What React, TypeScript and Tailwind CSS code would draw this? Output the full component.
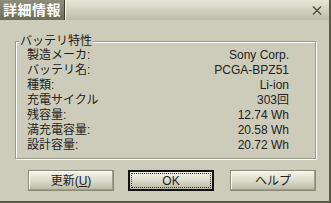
import React from "react";

const rows: [string, string][] = [
  ["製造メーカ:", "Sony Corp."],
  ["バッテリ名:", "PCGA-BPZ51"],
  ["種類:", "Li-ion"],
  ["充電サイクル", "303回"],
  ["残容量:", "12.74 Wh"],
  ["満充電容量:", "20.58 Wh"],
  ["設計容量:", "20.72 Wh"],
];

const font = { fontFamily: '"Liberation Sans", "Noto Sans CJK JP", sans-serif' };

function Btn({ children, def }: { children: React.ReactNode; def?: boolean }) {
  return (
    <div
      className={
        "h-[21px] w-[86px] flex items-center justify-center text-[12px] text-[#222] bg-gradient-to-b from-[#f4f4ea] via-[#dcdccc] to-[#b8b8a4] " +
        (def ? "border-2 border-[#111] outline-1 outline-dotted outline-[#333] -outline-offset-4" : "border border-[#8a8a78] shadow-[inset_-1px_-1px_0_#9c9c88,inset_1px_1px_0_#ffffff]")
      }
    >
      {children}
    </div>
  );
}

export default function App() {
  return (
    <div
      className="w-[331px] h-[203px] bg-[#cdccba] border-r-2 border-b-2 border-[#5c5c4c] overflow-hidden flex flex-col"
      style={font}
    >
      <div className="h-[20px] flex shrink-0">
        <div className="w-[65px] bg-gradient-to-b from-[#8e8e7a] to-[#6c6c58] border-r border-[#3e3e30] flex items-center pl-[3px] text-white font-bold text-[14px] tracking-[0.5px]">
          詳細情報
        </div>
        <div className="flex-1 bg-gradient-to-b from-[#e6e6d8] to-[#bcbca8] flex items-center justify-end pr-[7px] border-l border-[#f4f4ea]">
          <svg width="10" height="9" viewBox="0 0 10 9">
            <path d="M1 0.5 L9 8.5 M9 0.5 L1 8.5" stroke="#4a4a40" strokeWidth="1.3" />
          </svg>
        </div>
      </div>
      <div className="relative ml-[15px] mt-[21px] w-[301px] h-[118px] border border-[#9a9a88] shadow-[1px_1px_0_#ffffff,inset_1px_1px_0_#ffffff] pt-[6px] pl-[11px] pr-[26px]">
        <div className="absolute left-[3px] top-[-8px] bg-[#cdccba] px-[1px] text-[12px] leading-[14px] text-[#222]">
          バッテリ特性
        </div>
        {rows.map(([k, v]) => (
          <div key={k} className="flex justify-between h-[15px] leading-[15px] text-[12px] text-[#222]">
            <span>{k}</span>
            <span>{v}</span>
          </div>
        ))}
      </div>
      <div className="flex mt-[11px] ml-[28px]">
        <Btn>
          更新(<span className="underline">U</span>)
        </Btn>
        <div className="ml-[14px]">
          <Btn def>OK</Btn>
        </div>
        <div className="ml-[16px]">
          <Btn>ヘルプ</Btn>
        </div>
      </div>
    </div>
  );
}
